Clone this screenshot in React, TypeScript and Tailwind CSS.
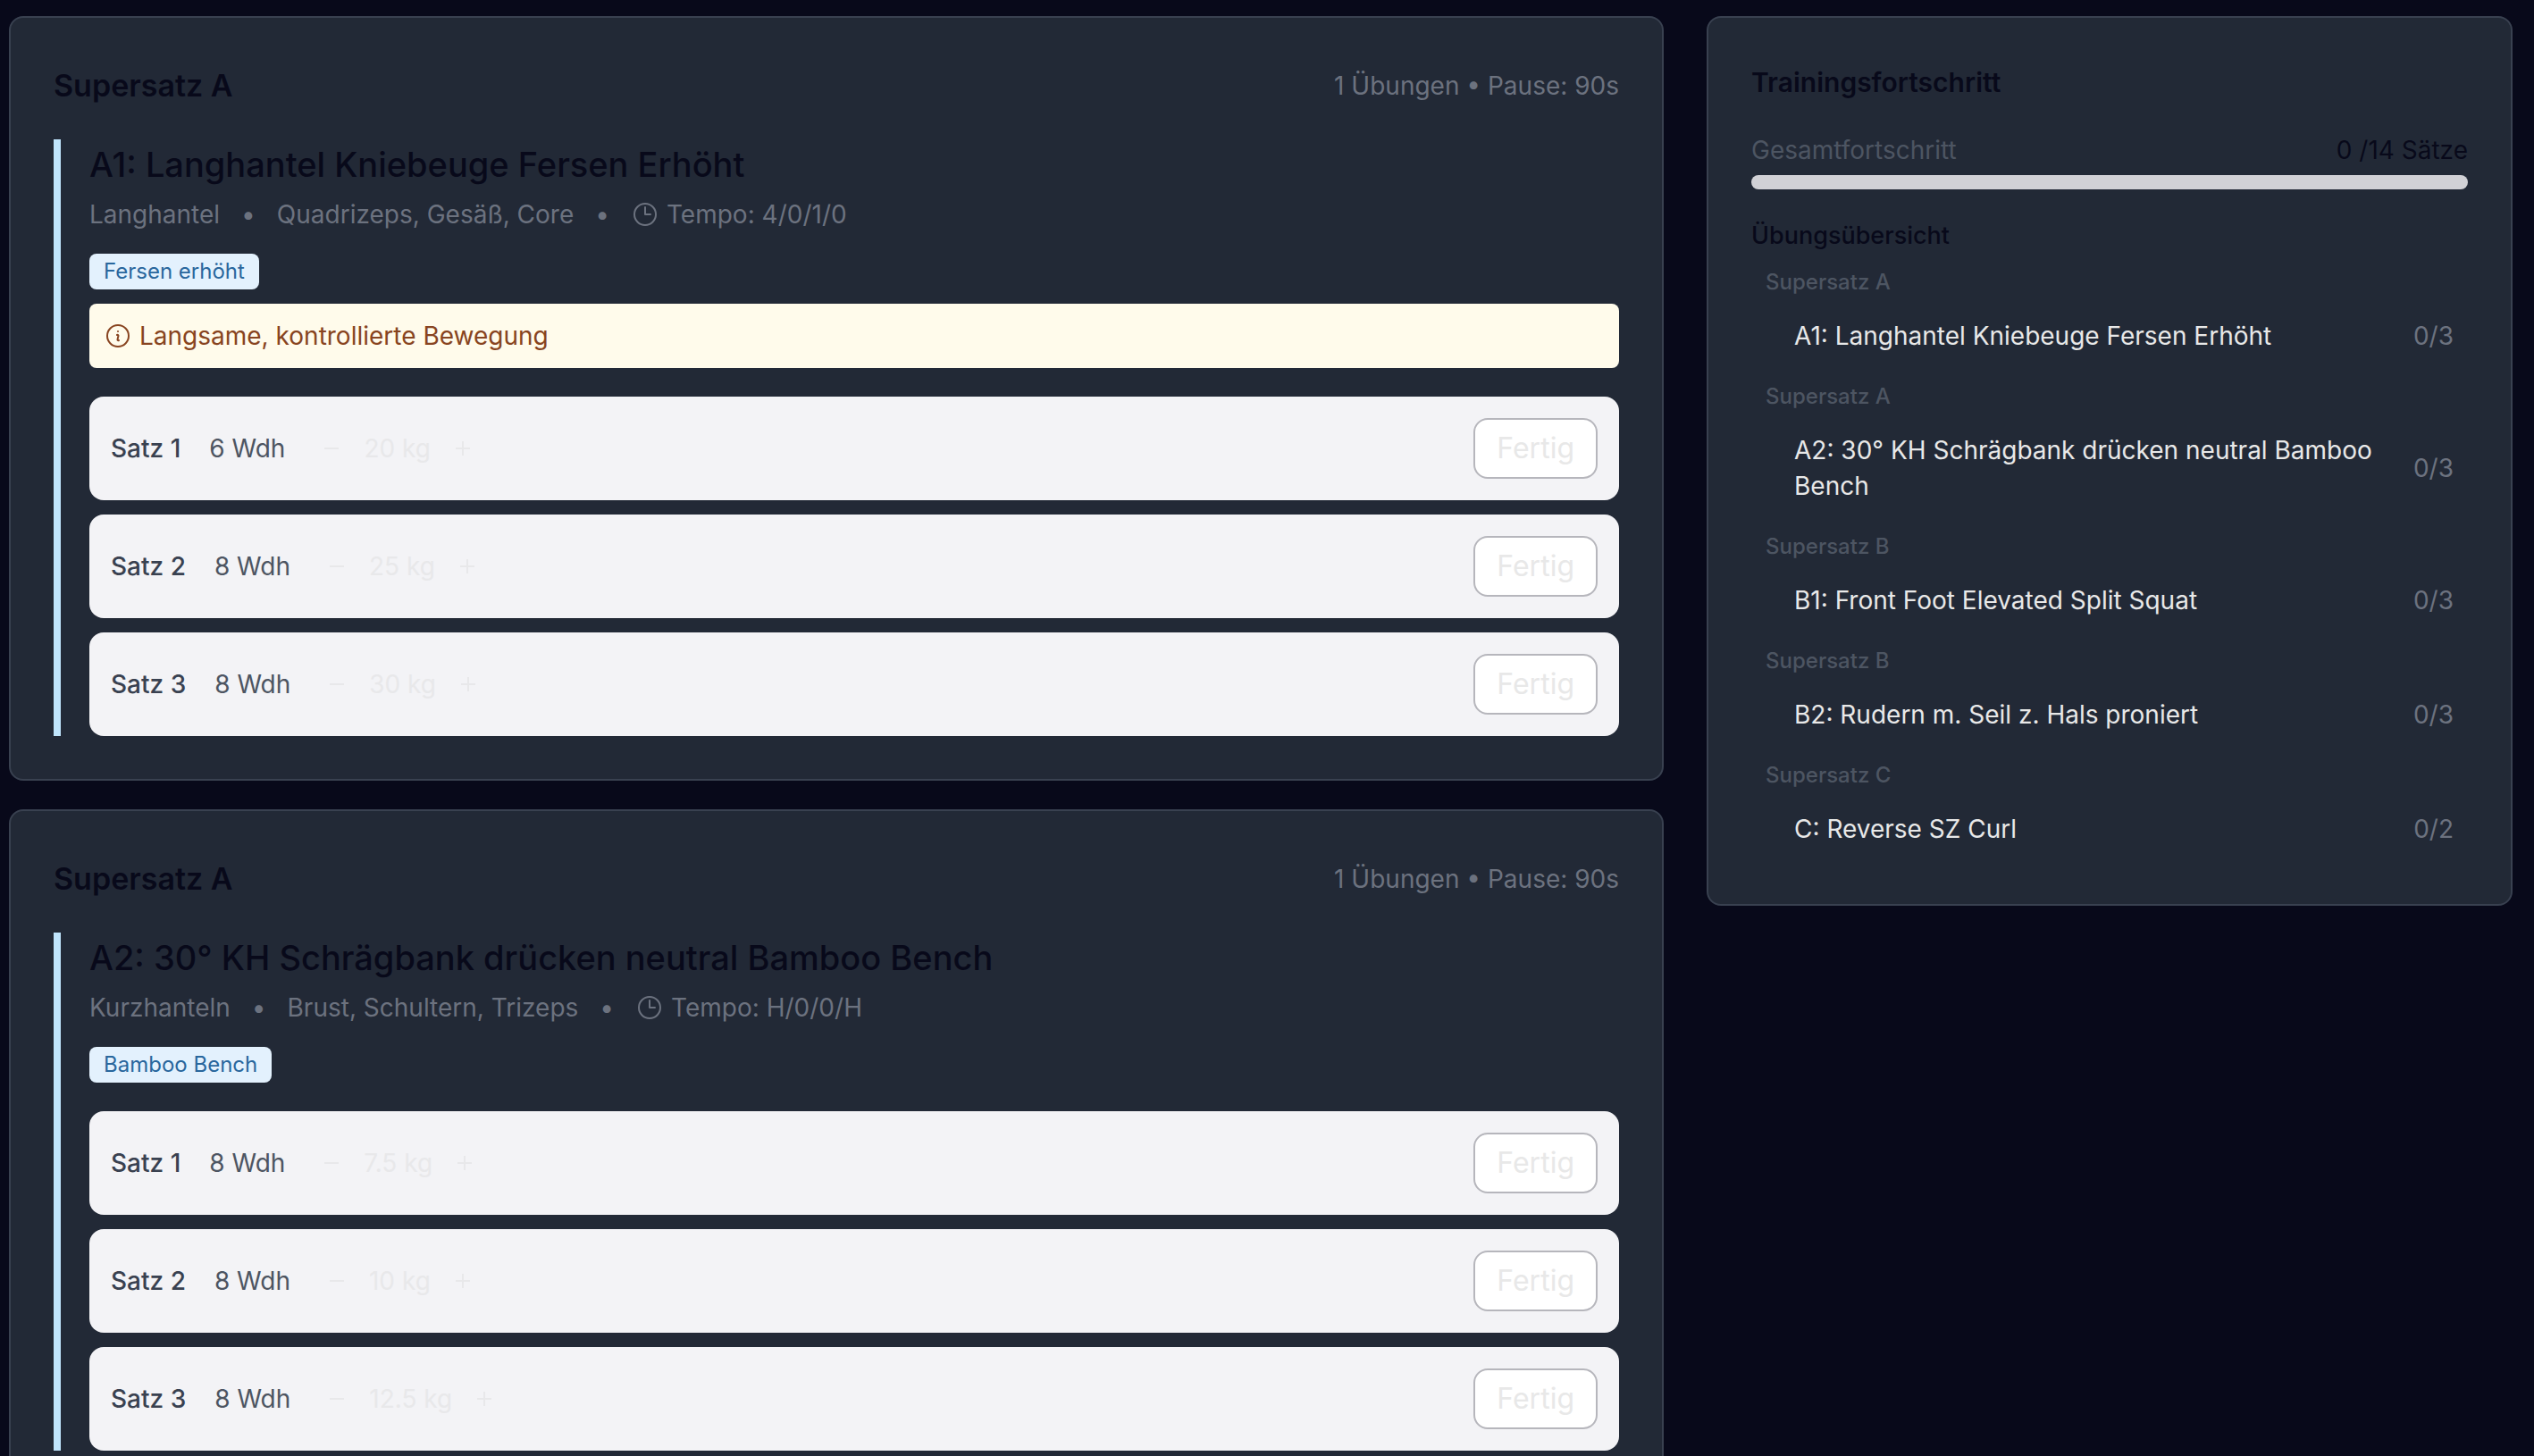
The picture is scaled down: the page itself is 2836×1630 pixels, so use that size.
type SetEntry = { reps: number; weight: string };

type Exercise = {
  superset: string;
  rest: number;
  name: string;
  equipment: string;
  muscles: string;
  tempo: string;
  tag: string;
  note?: string;
  sets: SetEntry[];
};

const exercises: Exercise[] = [
  {
    superset: "Supersatz A",
    rest: 90,
    name: "A1: Langhantel Kniebeuge Fersen Erhöht",
    equipment: "Langhantel",
    muscles: "Quadrizeps, Gesäß, Core",
    tempo: "4/0/1/0",
    tag: "Fersen erhöht",
    note: "Langsame, kontrollierte Bewegung",
    sets: [
      { reps: 6, weight: "20 kg" },
      { reps: 8, weight: "25 kg" },
      { reps: 8, weight: "30 kg" },
    ],
  },
  {
    superset: "Supersatz A",
    rest: 90,
    name: "A2: 30° KH Schrägbank drücken neutral Bamboo Bench",
    equipment: "Kurzhanteln",
    muscles: "Brust, Schultern, Trizeps",
    tempo: "H/0/0/H",
    tag: "Bamboo Bench",
    sets: [
      { reps: 8, weight: "7.5 kg" },
      { reps: 8, weight: "10 kg" },
      { reps: 8, weight: "12.5 kg" },
    ],
  },
];

const overview = [
  { superset: "Supersatz A", name: "A1: Langhantel Kniebeuge Fersen Erhöht", count: "0/3" },
  { superset: "Supersatz A", name: "A2: 30° KH Schrägbank drücken neutral Bamboo Bench", count: "0/3" },
  { superset: "Supersatz B", name: "B1: Front Foot Elevated Split Squat", count: "0/3" },
  { superset: "Supersatz B", name: "B2: Rudern m. Seil z. Hals proniert", count: "0/3" },
  { superset: "Supersatz C", name: "C: Reverse SZ Curl", count: "0/2" },
];

const iconPaths = {
  clock: "M12 6v6h4.5m4.5 0a9 9 0 1 1-18 0 9 9 0 0 1 18 0Z",
  info: "m11.25 11.25.041-.02a.75.75 0 0 1 1.063.852l-.708 2.836a.75.75 0 0 0 1.063.853l.041-.021M21 12a9 9 0 1 1-18 0 9 9 0 0 1 18 0Zm-9-3.75h.008v.008H12V8.25Z",
};

function OutlineIcon({ name }: { name: keyof typeof iconPaths }) {
  return (
    <svg
      viewBox="0 0 24 24"
      className="size-8 shrink-0"
      fill="none"
      stroke="currentColor"
      strokeWidth="1.5"
      strokeLinecap="round"
      strokeLinejoin="round"
      aria-hidden="true"
    >
      <path d={iconPaths[name]} />
    </svg>
  );
}

function StepIcon({ plus }: { plus?: boolean }) {
  return (
    <svg viewBox="0 0 24 24" className="size-6" fill="none" stroke="currentColor" strokeWidth="2" aria-hidden="true">
      <path d={plus ? "M4 12h16M12 4v16" : "M4 12h16"} />
    </svg>
  );
}

function SetRow({ index, entry }: { index: number; entry: SetEntry }) {
  return (
    <li className="flex items-center justify-between rounded-2xl bg-[#f3f3f6] p-6">
      <div className="flex items-center gap-8 text-[28px] leading-10">
        <span className="font-medium text-[#394150]">Satz {index}</span>
        <span className="text-[#4d5562]">{entry.reps} Wdh</span>
        <div className="flex items-center gap-2 text-[#e8e8ea]">
          <button type="button" aria-label="Gewicht verringern" className="p-2">
            <StepIcon />
          </button>
          <span className="px-2">{entry.weight}</span>
          <button type="button" aria-label="Gewicht erhöhen" className="p-2">
            <StepIcon plus />
          </button>
        </div>
      </div>
      <button
        type="button"
        className="rounded-2xl border-2 border-[#b6b6bc] bg-white px-6 text-[32px] leading-16 text-[#e8e8e8]"
      >
        Fertig
      </button>
    </li>
  );
}

function ExerciseCard({ exercise }: { exercise: Exercise }) {
  return (
    <section className="rounded-2xl border-2 border-[#394150] bg-[#222936] p-12">
      <header className="mb-8 flex items-center justify-between">
        <h2 className="text-[34px] leading-14 font-semibold text-[#08091a]">{exercise.superset}</h2>
        <p className="text-[28px] leading-10 text-[#6c727f]">1 Übungen • Pause: {exercise.rest}s</p>
      </header>
      <div className="border-l-8 border-[#c0e5fd] pl-8">
        <h3 className="text-[38px] leading-14 font-medium text-[#08091a]">{exercise.name}</h3>
        <div className="mt-2 flex items-center gap-6 text-[28px] leading-10 text-[#6c727f]">
          <span>{exercise.equipment}</span>
          <span>•</span>
          <span>{exercise.muscles}</span>
          <span>•</span>
          <span className="flex items-center gap-2">
            <OutlineIcon name="clock" />
            Tempo: {exercise.tempo}
          </span>
        </div>
        <div className="mt-6 flex">
          <span className="rounded-lg bg-[#e3f1fd] px-4 py-1 text-2xl leading-8 text-[#29679d]">{exercise.tag}</span>
        </div>
        {exercise.note && (
          <p className="mt-4 flex items-center gap-2 rounded-lg bg-[#fffbeb] p-4 text-[28px] leading-10 text-[#884420]">
            <OutlineIcon name="info" />
            {exercise.note}
          </p>
        )}
        <ul className="mt-8 flex flex-col gap-4">
          {exercise.sets.map((entry, i) => (
            <SetRow key={i} index={i + 1} entry={entry} />
          ))}
        </ul>
      </div>
    </section>
  );
}

function ProgressPanel() {
  return (
    <aside className="self-start rounded-2xl border-2 border-[#394150] bg-[#222936] p-12">
      <h2 className="text-[30px] leading-12 font-semibold text-[#08091a]">Trainingsfortschritt</h2>
      <div className="mt-8 flex justify-between text-[28px] leading-10">
        <span className="text-[#4d5562]">Gesamtfortschritt</span>
        <span className="text-[#08091a]">0 /14 Sätze</span>
      </div>
      <div
        role="progressbar"
        aria-label="Gesamtfortschritt"
        aria-valuenow={0}
        aria-valuemax={14}
        className="mt-2 h-4 rounded-full bg-[#d1d1d6]"
      />
      <h3 className="mt-8 text-[27px] leading-10 font-medium text-[#08091a]">Übungsübersicht</h3>
      <ul className="mt-4 flex flex-col gap-4">
        {overview.map((item) => (
          <li key={item.name}>
            <p className="px-4 text-2xl leading-8 font-medium text-[#4d5562]">{item.superset}</p>
            <div className="mt-2 ml-8 flex items-center justify-between gap-8 p-4 text-[28px] leading-10">
              <span className="text-[#e8e8e8]">{item.name}</span>
              <span className="text-[#6c727f]">{item.count}</span>
            </div>
          </li>
        ))}
      </ul>
    </aside>
  );
}

export default function App() {
  return (
    <main className="h-screen overflow-hidden bg-[#08091a] pt-[18px] pr-6 pl-[10px] font-[Inter,sans-serif]">
      <div className="grid grid-cols-3 gap-12">
        <div className="col-span-2 flex flex-col gap-8">
          {exercises.map((exercise) => (
            <ExerciseCard key={exercise.name} exercise={exercise} />
          ))}
        </div>
        <ProgressPanel />
      </div>
    </main>
  );
}
